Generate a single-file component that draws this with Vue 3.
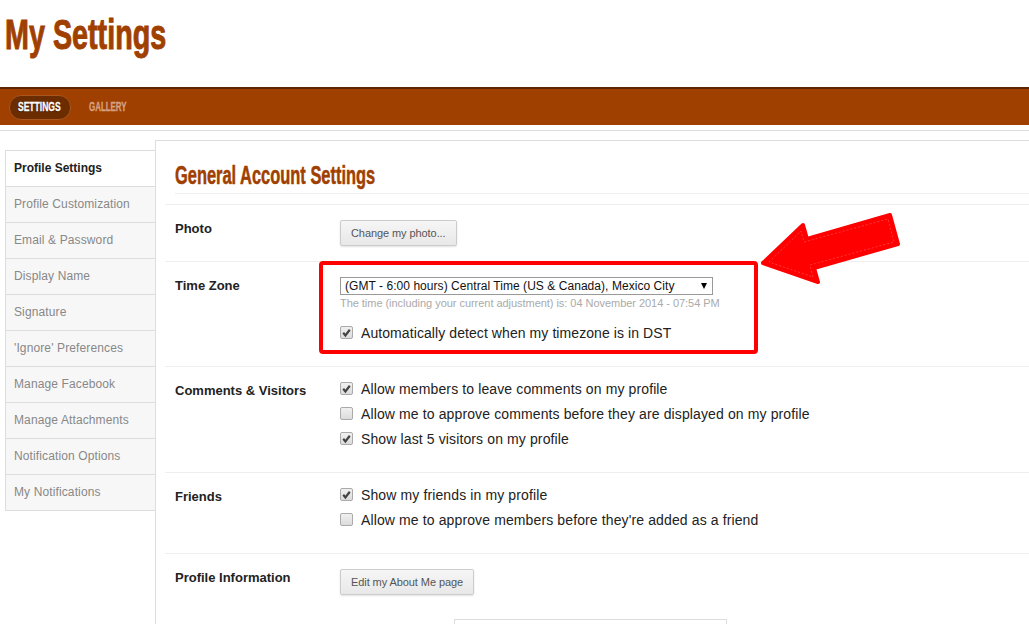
<script setup>
const tabs = [
  'Profile Settings',
  'Profile Customization',
  'Email & Password',
  'Display Name',
  'Signature',
  "'Ignore' Preferences",
  'Manage Facebook',
  'Manage Attachments',
  'Notification Options',
  'My Notifications'
]

const comments = [
  { text: 'Allow members to leave comments on my profile', checked: true },
  { text: 'Allow me to approve comments before they are displayed on my profile', checked: false },
  { text: 'Show last 5 visitors on my profile', checked: true }
]

const friends = [
  { text: 'Show my friends in my profile', checked: true },
  { text: "Allow me to approve members before they're added as a friend", checked: false }
]
</script>

<template>
  <div class="page">
    <header class="masthead">
      <h1><span>My Settings</span></h1>
    </header>

    <nav class="navbar">
      <a class="nav-pill"><span>SETTINGS</span></a>
      <a class="nav-link"><span>GALLERY</span></a>
    </nav>
    <div class="nav-rule"></div>

    <div class="layout">
      <ul class="sidebar">
        <li v-for="(tab, i) in tabs" :key="tab" :class="{ active: i === 0 }">{{ tab }}</li>
      </ul>

      <main class="panel">
        <h2><span>General Account Settings</span></h2>

        <section class="row row-photo">
          <div class="label">Photo</div>
          <div class="field">
            <button class="btn">Change my photo...</button>
          </div>
        </section>

        <section class="row row-zone">
          <div class="label">Time Zone</div>
          <div class="field">
            <div class="select">
              <span>(GMT - 6:00 hours) Central Time (US &amp; Canada), Mexico City</span>
              <i class="caret"></i>
            </div>
            <p class="hint">The time (including your current adjustment) is: 04 November 2014 - 07:54 PM</p>
            <label class="check dst">
              <span class="box">
                <svg viewBox="0 0 13 13" width="13" height="13"><path d="M3.2 6.8 5.4 9.4 9.8 3.8" fill="none" stroke="#444" stroke-width="2.2" /></svg>
              </span>
              Automatically detect when my timezone is in DST
            </label>
          </div>
        </section>

        <section class="row row-comments">
          <div class="label">Comments &amp; Visitors</div>
          <div class="field">
            <label v-for="c in comments" :key="c.text" class="check">
              <span class="box">
                <svg v-if="c.checked" viewBox="0 0 13 13" width="13" height="13"><path d="M3.2 6.8 5.4 9.4 9.8 3.8" fill="none" stroke="#444" stroke-width="2.2" /></svg>
              </span>
              {{ c.text }}
            </label>
          </div>
        </section>

        <section class="row row-friends">
          <div class="label">Friends</div>
          <div class="field">
            <label v-for="c in friends" :key="c.text" class="check">
              <span class="box">
                <svg v-if="c.checked" viewBox="0 0 13 13" width="13" height="13"><path d="M3.2 6.8 5.4 9.4 9.8 3.8" fill="none" stroke="#444" stroke-width="2.2" /></svg>
              </span>
              {{ c.text }}
            </label>
          </div>
        </section>

        <section class="row row-info">
          <div class="label">Profile Information</div>
          <div class="field">
            <button class="btn">Edit my About Me page</button>
          </div>
        </section>

        <div class="about-box"></div>
      </main>
    </div>

    <!-- annotation drawn over the screenshot -->
    <div class="callout"></div>
    <svg class="arrow" viewBox="0 0 150 80" width="150" height="80">
      <path d="M3 52 43 14 47 28 130 4 138 33 54 57 58 71Z" fill="#f00" stroke="#f00" stroke-width="4" stroke-linejoin="round" />
      <path d="M9 51 41 20 44 31 128 8 134 31 50 54 53 66Z" fill="none" stroke="#ff5a5a" stroke-width="0.6" stroke-dasharray="2 2" />
    </svg>
  </div>
</template>

<style scoped>
.page {
  position: relative;
  height: 624px;
  overflow: hidden;
  background: #fff;
  font-family: "Liberation Sans", Arial, sans-serif;
  color: #222;
}

.masthead {
  height: 87px;
}

/* no condensed face is installed, so the bold sans is squeezed */
h1 span,
h2 span,
.navbar span {
  display: inline-block;
  white-space: nowrap;
  transform-origin: left center;
}

h1 {
  margin: 0;
  padding: 9px 0 0 5px;
  font-size: 43px;
  line-height: 50px;
  font-weight: 700;
  color: #a04000;
}

h1 span {
  transform: scaleX(0.668);
  -webkit-text-stroke: 1px #a04000;
}

.navbar {
  display: flex;
  align-items: center;
  height: 36px;
  background: #a04000;
  border-top: 2px solid #5a2500;
  font-size: 12px;
  font-weight: 700;
}

.navbar span {
  transform: scaleX(0.71);
  -webkit-text-stroke: 0.3px;
}

.nav-pill {
  margin-left: 9px;
  width: 62px;
  height: 25px;
  box-sizing: border-box;
  padding-left: 8px;
  border: 1px solid #a9561f;
  border-radius: 12px;
  background: #6b2c00;
  color: #fff;
  line-height: 23px;
  white-space: nowrap;
  text-shadow: 0 1px 1px #3a1800;
}

.nav-link {
  margin-left: 18px;
  color: #d6a183;
}

.nav-link span {
  transform: scaleX(0.66);
}

.nav-rule {
  margin-top: 5px;
  height: 1px;
  background: #ddd;
}

.layout {
  display: flex;
  align-items: flex-start;
  padding: 9px 0 0 5px;
}

.sidebar {
  flex: none;
  width: 151px;
  box-sizing: border-box;
  margin: 10px 0 0;
  padding: 0;
  list-style: none;
  border: 1px solid #ddd;
  border-right: 0;
  background: #f7f7f7;
}

.sidebar li {
  height: 36px;
  box-sizing: border-box;
  padding-left: 8px;
  line-height: 35px;
  font-size: 12px;
  letter-spacing: 0.12px;
  color: #888;
  border-bottom: 1px solid #ddd;
  border-right: 1px solid #ddd;
}

.sidebar li:last-child {
  border-bottom: 0;
  height: 35px;
}

.sidebar li.active {
  background: #fff;
  color: #222;
  font-weight: 700;
  letter-spacing: 0;
  border-right: 0;
}

.panel {
  flex: 1;
  height: 500px;
  margin-left: -1px;
  padding-left: 9px;
  border-left: 1px solid #ddd;
  border-top: 1px solid #ddd;
}

h2 {
  margin: 0 0 10px 10px;
  height: 53px;
  box-sizing: border-box;
  padding-top: 19px;
  border-bottom: 1px solid #eee;
  font-size: 25px;
  line-height: 30px;
  font-weight: 700;
  color: #a04000;
}

h2 span {
  transform: scaleX(0.657);
  -webkit-text-stroke: 0.5px #a04000;
}

.row {
  display: flex;
  box-sizing: border-box;
  padding: 16px 0 0 10px;
  border-top: 1px solid #eee;
}

.row-photo { height: 57px; }
.row-zone { height: 105px; }
.row-comments { height: 106px; }
.row-friends { height: 81px; }
.row-info { height: 70px; }

.label {
  flex: none;
  width: 165px;
  font-size: 13px;
  line-height: 16px;
  font-weight: 700;
}

.btn {
  display: block;
  margin-top: -1px;
  height: 26px;
  padding: 0 10px;
  border: 1px solid #ccc;
  border-radius: 2px;
  background: linear-gradient(#f6f6f6, #e8e8e8);
  box-shadow: 0 1px 2px rgba(0, 0, 0, 0.12);
  color: #555;
  font-family: "Liberation Sans", Arial, sans-serif;
  font-size: 11px;
  letter-spacing: -0.08px;
}

.row-zone .field {
  margin-top: -1px;
}

.select {
  display: flex;
  align-items: center;
  justify-content: space-between;
  width: 373px;
  height: 18px;
  box-sizing: border-box;
  padding: 0 5px 0 4px;
  border: 1px solid #999;
  font-size: 12px;
  letter-spacing: 0.05px;
  color: #111;
}

.caret {
  width: 0;
  height: 0;
  border-left: 3.5px solid transparent;
  border-right: 3.5px solid transparent;
  border-top: 6px solid #000;
}

.hint {
  margin: 1px 0 0;
  font-size: 11px;
  line-height: 14px;
  letter-spacing: -0.04px;
  color: #aaa;
}

.check {
  display: flex;
  align-items: center;
  gap: 8px;
  height: 25px;
  font-size: 14px;
  letter-spacing: 0.12px;
  color: #222;
}

.row-comments .field {
  margin-top: -7px;
}

.row-friends .field {
  margin-top: -7px;
}

.dst {
  margin-top: 10px;
  letter-spacing: 0.08px;
}

.box {
  flex: none;
  box-sizing: border-box;
  width: 13px;
  height: 13px;
  border: 1px solid #aaa;
  border-radius: 2px;
  background: linear-gradient(#f0f0f0, #dcdcdc);
  display: flex;
}

.box svg {
  margin: -1px;
}

.about-box {
  width: 273px;
  height: 40px;
  margin: -4px 0 0 289px;
  box-sizing: border-box;
  border: 1px solid #ddd;
}

.callout {
  position: absolute;
  left: 319px;
  top: 261px;
  width: 439px;
  height: 93px;
  box-sizing: border-box;
  border: 4px solid #f00;
  border-radius: 4px;
}

.arrow {
  position: absolute;
  left: 760px;
  top: 211px;
}
</style>

<style>
html, body {
  margin: 0;
  overflow: hidden;
}
</style>
